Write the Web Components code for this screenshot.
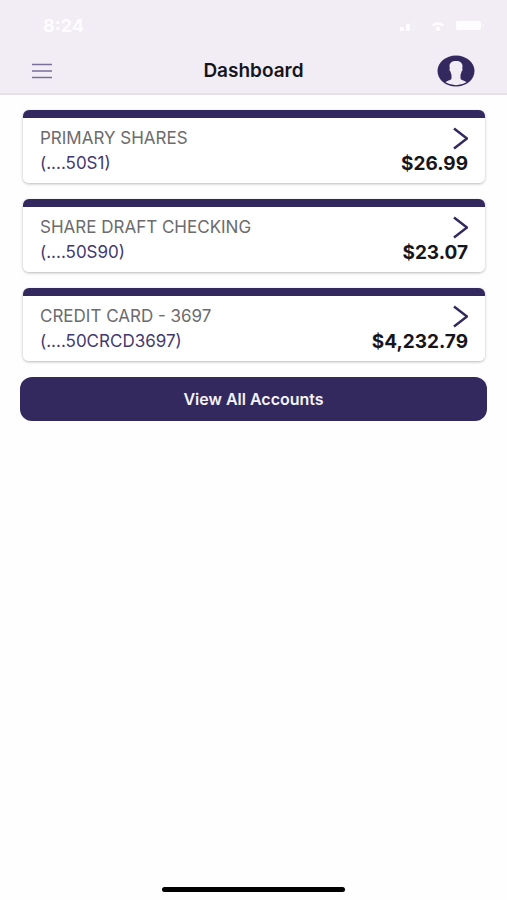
<!DOCTYPE html>
<html lang="en">
<head>
<meta charset="utf-8">
<meta name="viewport" content="width=device-width, initial-scale=1">
<title>Dashboard</title>
<style>
  body {
    margin: 0;
    background: #fefefe;
    color: #17151c;
    font-family: Inter, "Liberation Sans", sans-serif;
    font-size: 16px;
    --brand: #33295f;
    --bar: #f2edf5;
  }
</style>
</head>
<body>
<dashboard-app></dashboard-app>

<template id="status-bar">
  <style>
    :host { display: flex; align-items: center; justify-content: space-between; height: 52px; padding: 0 22px 0 43px; box-sizing: border-box; color: #fdfcfe; }
    time { font-size: 18px; line-height: 20px; font-weight: 700; }
    svg { display: block; }
  </style>
  <time>8:24</time>
  <svg width="86" height="14" viewBox="0 0 86 14" fill="currentColor" aria-hidden="true">
    <rect x="1" y="8" width="4" height="4" rx="1"/>
    <rect x="7" y="5" width="4" height="7" rx="1"/>
    <rect x="13" y="3" width="3" height="9" rx="1" opacity=".25"/>
    <path d="M33 5.500Q39 .8 45 5.500L43.500 7.500Q39 4.500 34.500 7.500Z"/>
    <circle cx="39" cy="9.800" r="2.200"/>
    <rect x="57" y="2" width="25" height="9" rx="2"/>
    <rect x="83" y="5" width="2" height="3" rx="1" opacity=".4"/>
  </svg>
</template>

<template id="nav-bar">
  <style>
    :host { display: grid; grid-template-columns: 1fr auto 1fr; align-items: center; height: 41px; padding: 0 32px 4px; box-sizing: border-box; }
    button { display: block; border: 0; padding: 0; background: none; cursor: pointer; }
    .profile { justify-self: end; }
    h1 { margin: 0; font-size: 19px; line-height: 24px; font-weight: 600; }
    svg { display: block; }
  </style>
  <button class="menu" type="button" aria-label="Menu">
    <svg width="20" height="16" viewBox="0 0 20 16" stroke="#786f9a" stroke-width="1.700"><path d="M0 1.500H20M0 8H20M0 14.500H20"/></svg>
  </button>
  <h1><slot></slot></h1>
  <button class="profile" type="button" aria-label="Profile">
    <svg width="38" height="32" viewBox="0 0 38 32">
      <ellipse cx="19" cy="16" rx="18.500" ry="15.500" fill="#33295f"/>
      <path fill="#f2edf5" d="M19 6C14.800 6 12.300 8 12.500 11.500L12.800 13.500C12.200 14 12.500 16 13.500 16.600C13.700 18 14 19 14.500 19.800V23.500C14.500 25 11.200 25.300 8.500 27.300Q13 30.200 19 30.200T29.500 27.300C26.800 25.300 23.500 25 23.500 23.500V19.800C24 19 24.300 18 24.500 16.600C25.500 16 25.800 14 25.200 13.500L25.500 11.500C25.700 8 23.200 6 19 6Z"/>
    </svg>
  </button>
</template>

<template id="account-card">
  <style>
    :host { display: block; }
    a { display: grid; grid-template-columns: 1fr auto; align-items: center; box-sizing: border-box; padding: 16px 17px 7px; border-radius: 6px; background: linear-gradient(var(--brand) 8px, #fff 8px); box-shadow: 0 1px 3px rgb(0 0 0 / .28); color: inherit; text-decoration: none; font-size: 17px; line-height: 25px; }
    .name { color: #6c6b6d; }
    .number { color: #44396f; }
    .amount { font-size: 19px; font-weight: 700; text-align: right; }
    svg { display: block; justify-self: end; }
  </style>
  <a href="#account">
    <span class="name"><slot name="name"></slot></span>
    <svg width="16" height="24" viewBox="0 0 16 24" fill="none" stroke="#33295f" stroke-width="2.500" aria-hidden="true"><path d="M2 1.500L15 11.500L2 21.500"/></svg>
    <span class="number"><slot name="number"></slot></span>
    <span class="amount"><slot name="amount"></slot></span>
  </a>
</template>

<template id="primary-button">
  <style>
    :host { display: block; }
    button { display: block; width: 100%; height: 44px; border: 0; border-radius: 12px; background: var(--brand); color: #f4f2f8; font: inherit; font-weight: 600; cursor: pointer; }
  </style>
  <button type="button"><slot></slot></button>
</template>

<template id="dashboard-app">
  <style>
    :host { display: flex; flex-direction: column; min-height: 100vh; }
    header { background: var(--bar); border-bottom: 2px solid #e5e2e7; }
    main { flex: 1; display: flex; flex-direction: column; gap: 16px; padding: 15px 20px; }
    .accounts { display: flex; flex-direction: column; gap: 16px; padding: 0 2px 0 3px; }
    footer { display: flex; justify-content: center; padding: 8px 0; }
    .home { width: 36%; height: 5px; border-radius: 3px; background: #000; }
  </style>
  <header>
    <status-bar></status-bar>
    <nav-bar>Dashboard</nav-bar>
  </header>
  <main>
    <section class="accounts" aria-label="Accounts">
      <account-card><span slot="name">PRIMARY SHARES</span><span slot="number">(....50S1)</span><span slot="amount">$26.99</span></account-card>
      <account-card><span slot="name">SHARE DRAFT CHECKING</span><span slot="number">(....50S90)</span><span slot="amount">$23.07</span></account-card>
      <account-card><span slot="name">CREDIT CARD - 3697</span><span slot="number">(....50CRCD3697)</span><span slot="amount">$4,232.79</span></account-card>
    </section>
    <primary-button>View All Accounts</primary-button>
  </main>
  <footer><div class="home"></div></footer>
</template>

<script>
  for (const name of ["status-bar", "nav-bar", "account-card", "primary-button", "dashboard-app"]) {
    customElements.define(name, class extends HTMLElement {
      constructor() {
        super();
        this.attachShadow({ mode: "open" }).append(document.getElementById(name).content.cloneNode(true));
      }
    });
  }
</script>
</body>
</html>
